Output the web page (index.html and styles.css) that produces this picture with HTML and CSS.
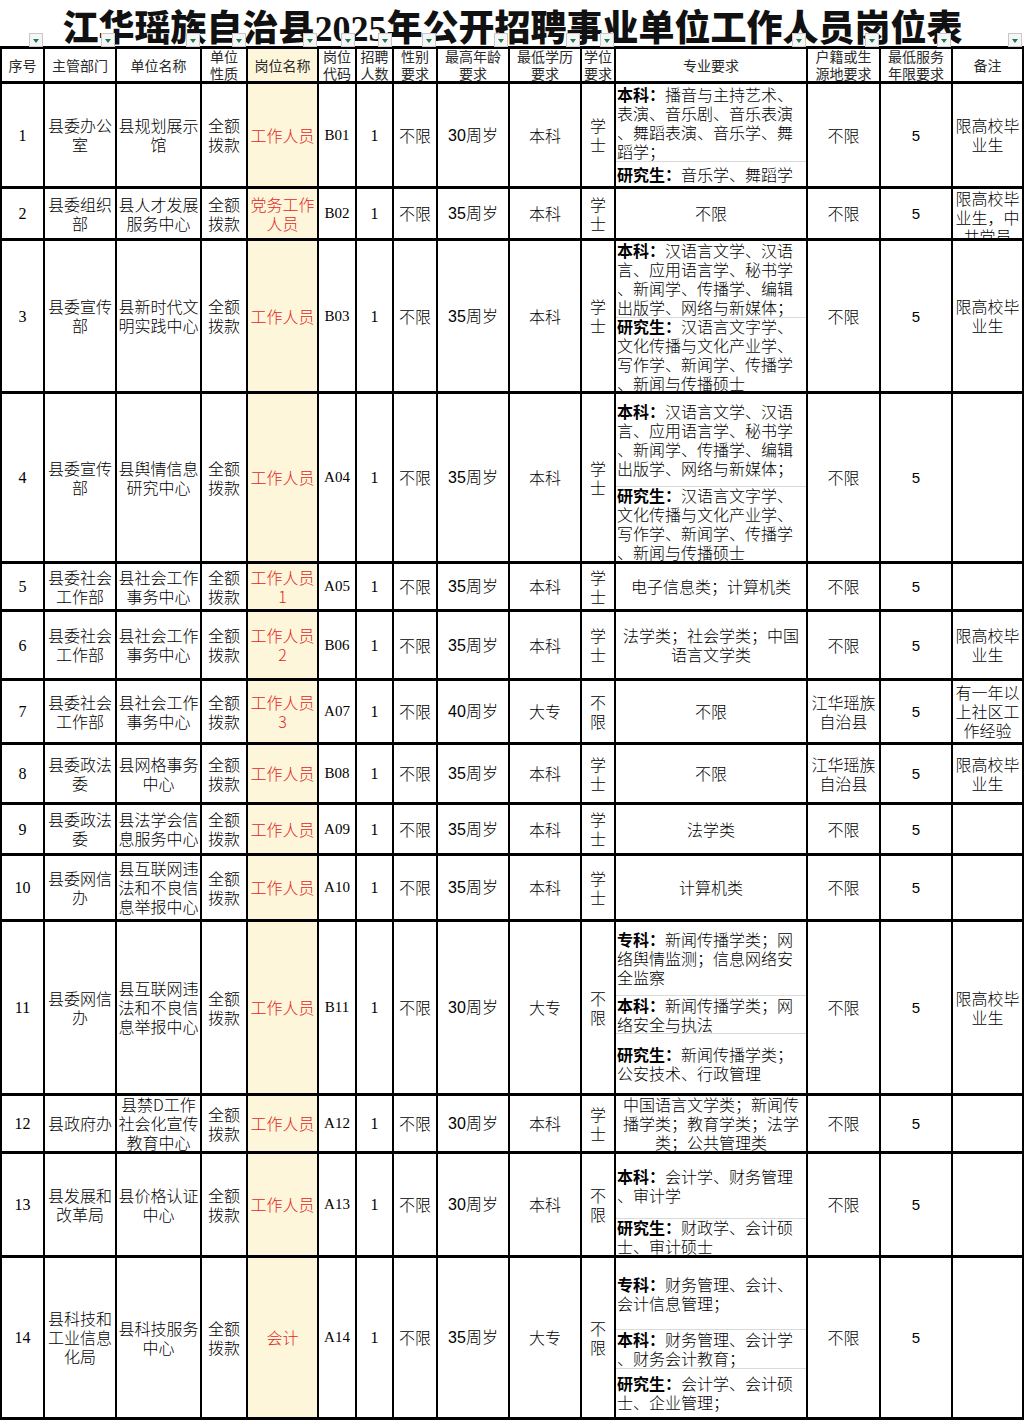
FILE: index.html
```html
<!DOCTYPE html>
<html lang="zh-CN">
<head>
<meta charset="utf-8">
<title>江华瑶族自治县2025年公开招聘事业单位工作人员岗位表</title>
<link rel="stylesheet" href="styles.css">
</head>
<body>
<h1 class="title">江华瑶族自治县<span class="num">2025</span>年公开招聘事业单位工作人员岗位表</h1>
<div class="sheet">
  <div class="row head">
    <div class="c">序号<i class="flt"></i></div>
    <div class="c">主管部门<i class="flt"></i></div>
    <div class="c">单位名称<i class="flt"></i></div>
    <div class="c">单位<br>性质<i class="flt"></i></div>
    <div class="c pos">岗位名称<i class="flt"></i></div>
    <div class="c">岗位<br>代码<i class="flt"></i></div>
    <div class="c">招聘<br>人数<i class="flt"></i></div>
    <div class="c">性别<br>要求<i class="flt"></i></div>
    <div class="c">最高年龄<br>要求<i class="flt"></i></div>
    <div class="c">最低学历<br>要求<i class="flt"></i></div>
    <div class="c">学位<br>要求<i class="flt"></i></div>
    <div class="c">专业要求<i class="flt"></i></div>
    <div class="c">户籍或生<br>源地要求<i class="flt"></i></div>
    <div class="c">最低服务<br>年限要求<i class="flt"></i></div>
    <div class="c">备注<i class="flt"></i></div>
  </div>

  <div class="row">
    <div class="c seq">1</div>
    <div class="c">县委办公<br>室</div>
    <div class="c">县规划展示<br>馆</div>
    <div class="c">全额<br>拨款</div>
    <div class="c pos">工作人员</div>
    <div class="c code">B01</div>
    <div class="c seq">1</div>
    <div class="c">不限</div>
    <div class="c age">30周岁</div>
    <div class="c">本科</div>
    <div class="c">学<br>士</div>
    <div class="c spec s1">
      <div class="blk"><div><b>本科：</b>播音与主持艺术、<br>表演、音乐剧、音乐表演<br>、舞蹈表演、音乐学、舞<br>蹈学；</div></div>
      <div class="blk"><div><b>研究生：</b>音乐学、舞蹈学</div></div>
    </div>
    <div class="c">不限</div>
    <div class="c yrs">5</div>
    <div class="c">限高校毕<br>业生</div>
  </div>

  <div class="row">
    <div class="c seq">2</div>
    <div class="c">县委组织<br>部</div>
    <div class="c">县人才发展<br>服务中心</div>
    <div class="c">全额<br>拨款</div>
    <div class="c pos">党务工作<br>人员</div>
    <div class="c code">B02</div>
    <div class="c seq">1</div>
    <div class="c">不限</div>
    <div class="c age">35周岁</div>
    <div class="c">本科</div>
    <div class="c">学<br>士</div>
    <div class="c">不限</div>
    <div class="c">不限</div>
    <div class="c yrs">5</div>
    <div class="c top">限高校毕<br>业生，中<br>共党员</div>
  </div>

  <div class="row">
    <div class="c seq">3</div>
    <div class="c">县委宣传<br>部</div>
    <div class="c">县新时代文<br>明实践中心</div>
    <div class="c">全额<br>拨款</div>
    <div class="c pos">工作人员</div>
    <div class="c code">B03</div>
    <div class="c seq">1</div>
    <div class="c">不限</div>
    <div class="c age">35周岁</div>
    <div class="c">本科</div>
    <div class="c">学<br>士</div>
    <div class="c spec s3">
      <div class="blk"><div><b>本科：</b>汉语言文学、汉语<br>言、应用语言学、秘书学<br>、新闻学、传播学、编辑<br>出版学、网络与新媒体；</div></div>
      <div class="blk"><div><b>研究生：</b>汉语言文字学、<br>文化传播与文化产业学、<br>写作学、新闻学、传播学<br>、新闻与传播硕士</div></div>
    </div>
    <div class="c">不限</div>
    <div class="c yrs">5</div>
    <div class="c">限高校毕<br>业生</div>
  </div>

  <div class="row">
    <div class="c seq">4</div>
    <div class="c">县委宣传<br>部</div>
    <div class="c">县舆情信息<br>研究中心</div>
    <div class="c">全额<br>拨款</div>
    <div class="c pos">工作人员</div>
    <div class="c code">A04</div>
    <div class="c seq">1</div>
    <div class="c">不限</div>
    <div class="c age">35周岁</div>
    <div class="c">本科</div>
    <div class="c">学<br>士</div>
    <div class="c spec s4">
      <div class="blk"><div><b>本科：</b>汉语言文学、汉语<br>言、应用语言学、秘书学<br>、新闻学、传播学、编辑<br>出版学、网络与新媒体；</div></div>
      <div class="blk"><div><b>研究生：</b>汉语言文字学、<br>文化传播与文化产业学、<br>写作学、新闻学、传播学<br>、新闻与传播硕士</div></div>
    </div>
    <div class="c">不限</div>
    <div class="c yrs">5</div>
    <div class="c"></div>
  </div>

  <div class="row">
    <div class="c seq">5</div>
    <div class="c">县委社会<br>工作部</div>
    <div class="c">县社会工作<br>事务中心</div>
    <div class="c">全额<br>拨款</div>
    <div class="c pos">工作人员<br>1</div>
    <div class="c code">A05</div>
    <div class="c seq">1</div>
    <div class="c">不限</div>
    <div class="c age">35周岁</div>
    <div class="c">本科</div>
    <div class="c">学<br>士</div>
    <div class="c">电子信息类；计算机类</div>
    <div class="c">不限</div>
    <div class="c yrs">5</div>
    <div class="c"></div>
  </div>

  <div class="row">
    <div class="c seq">6</div>
    <div class="c">县委社会<br>工作部</div>
    <div class="c">县社会工作<br>事务中心</div>
    <div class="c">全额<br>拨款</div>
    <div class="c pos">工作人员<br>2</div>
    <div class="c code">B06</div>
    <div class="c seq">1</div>
    <div class="c">不限</div>
    <div class="c age">35周岁</div>
    <div class="c">本科</div>
    <div class="c">学<br>士</div>
    <div class="c">法学类；社会学类；中国<br>语言文学类</div>
    <div class="c">不限</div>
    <div class="c yrs">5</div>
    <div class="c">限高校毕<br>业生</div>
  </div>

  <div class="row">
    <div class="c seq">7</div>
    <div class="c">县委社会<br>工作部</div>
    <div class="c">县社会工作<br>事务中心</div>
    <div class="c">全额<br>拨款</div>
    <div class="c pos">工作人员<br>3</div>
    <div class="c code">A07</div>
    <div class="c seq">1</div>
    <div class="c">不限</div>
    <div class="c age">40周岁</div>
    <div class="c">大专</div>
    <div class="c">不<br>限</div>
    <div class="c">不限</div>
    <div class="c">江华瑶族<br>自治县</div>
    <div class="c yrs">5</div>
    <div class="c">有一年以<br>上社区工<br>作经验</div>
  </div>

  <div class="row">
    <div class="c seq">8</div>
    <div class="c">县委政法<br>委</div>
    <div class="c">县网格事务<br>中心</div>
    <div class="c">全额<br>拨款</div>
    <div class="c pos">工作人员</div>
    <div class="c code">B08</div>
    <div class="c seq">1</div>
    <div class="c">不限</div>
    <div class="c age">35周岁</div>
    <div class="c">本科</div>
    <div class="c">学<br>士</div>
    <div class="c">不限</div>
    <div class="c">江华瑶族<br>自治县</div>
    <div class="c yrs">5</div>
    <div class="c">限高校毕<br>业生</div>
  </div>

  <div class="row">
    <div class="c seq">9</div>
    <div class="c">县委政法<br>委</div>
    <div class="c">县法学会信<br>息服务中心</div>
    <div class="c">全额<br>拨款</div>
    <div class="c pos">工作人员</div>
    <div class="c code">A09</div>
    <div class="c seq">1</div>
    <div class="c">不限</div>
    <div class="c age">35周岁</div>
    <div class="c">本科</div>
    <div class="c">学<br>士</div>
    <div class="c">法学类</div>
    <div class="c">不限</div>
    <div class="c yrs">5</div>
    <div class="c"></div>
  </div>

  <div class="row">
    <div class="c seq">10</div>
    <div class="c">县委网信<br>办</div>
    <div class="c">县互联网违<br>法和不良信<br>息举报中心</div>
    <div class="c">全额<br>拨款</div>
    <div class="c pos">工作人员</div>
    <div class="c code">A10</div>
    <div class="c seq">1</div>
    <div class="c">不限</div>
    <div class="c age">35周岁</div>
    <div class="c">本科</div>
    <div class="c">学<br>士</div>
    <div class="c">计算机类</div>
    <div class="c">不限</div>
    <div class="c yrs">5</div>
    <div class="c"></div>
  </div>

  <div class="row">
    <div class="c seq">11</div>
    <div class="c">县委网信<br>办</div>
    <div class="c">县互联网违<br>法和不良信<br>息举报中心</div>
    <div class="c">全额<br>拨款</div>
    <div class="c pos">工作人员</div>
    <div class="c code">B11</div>
    <div class="c seq">1</div>
    <div class="c">不限</div>
    <div class="c age">30周岁</div>
    <div class="c">大专</div>
    <div class="c">不<br>限</div>
    <div class="c spec s11">
      <div class="blk"><div><b>专科：</b>新闻传播学类；网<br>络舆情监测；信息网络安<br>全监察</div></div>
      <div class="blk"><div><b>本科：</b>新闻传播学类；网<br>络安全与执法</div></div>
      <div class="blk"><div><b>研究生：</b>新闻传播学类；<br>公安技术、行政管理</div></div>
    </div>
    <div class="c">不限</div>
    <div class="c yrs">5</div>
    <div class="c">限高校毕<br>业生</div>
  </div>

  <div class="row">
    <div class="c seq">12</div>
    <div class="c">县政府办</div>
    <div class="c">县禁D工作<br>社会化宣传<br>教育中心</div>
    <div class="c">全额<br>拨款</div>
    <div class="c pos">工作人员</div>
    <div class="c code">A12</div>
    <div class="c seq">1</div>
    <div class="c">不限</div>
    <div class="c age">30周岁</div>
    <div class="c">本科</div>
    <div class="c">学<br>士</div>
    <div class="c">中国语言文学类；新闻传<br>播学类；教育学类；法学<br>类；公共管理类</div>
    <div class="c">不限</div>
    <div class="c yrs">5</div>
    <div class="c"></div>
  </div>

  <div class="row">
    <div class="c seq">13</div>
    <div class="c">县发展和<br>改革局</div>
    <div class="c">县价格认证<br>中心</div>
    <div class="c">全额<br>拨款</div>
    <div class="c pos">工作人员</div>
    <div class="c code">A13</div>
    <div class="c seq">1</div>
    <div class="c">不限</div>
    <div class="c age">30周岁</div>
    <div class="c">本科</div>
    <div class="c">不<br>限</div>
    <div class="c spec s13">
      <div class="blk"><div><b>本科：</b>会计学、财务管理<br>、审计学</div></div>
      <div class="blk"><div><b>研究生：</b>财政学、会计硕<br>士、审计硕士</div></div>
    </div>
    <div class="c">不限</div>
    <div class="c yrs">5</div>
    <div class="c"></div>
  </div>

  <div class="row">
    <div class="c seq">14</div>
    <div class="c">县科技和<br>工业信息<br>化局</div>
    <div class="c">县科技服务<br>中心</div>
    <div class="c">全额<br>拨款</div>
    <div class="c pos">会计</div>
    <div class="c code">A14</div>
    <div class="c seq">1</div>
    <div class="c">不限</div>
    <div class="c age">35周岁</div>
    <div class="c">大专</div>
    <div class="c">不<br>限</div>
    <div class="c spec s14">
      <div class="blk"><div><b>专科：</b>财务管理、会计、<br>会计信息管理；</div></div>
      <div class="blk"><div><b>本科：</b>财务管理、会计学<br>、财务会计教育；</div></div>
      <div class="blk"><div><b>研究生：</b>会计学、会计硕<br>士、企业管理；</div></div>
    </div>
    <div class="c">不限</div>
    <div class="c yrs">5</div>
    <div class="c"></div>
  </div>
</div>
</body>
</html>
```

FILE: styles.css
```css
* { box-sizing: border-box; }

html, body {
  margin: 0;
  padding: 0;
  background: #fff;
}

body {
  width: 1025px;
  font-family: "Noto Sans CJK SC", "Noto Sans", sans-serif;
  color: #000;
}

.title {
  margin: 0;
  height: 46px;
  line-height: 50px;
  text-align: center;
  font-size: 36px;
  font-weight: 900;
  color: #111;
  white-space: nowrap;
}

.title .num {
  font-family: "Liberation Serif", "Noto Sans CJK SC", serif;
  font-weight: 700;
}

.sheet {
  display: grid;
  width: 1024px;
  grid-template-columns: 41px 70px 83px 44px 69px 36px 35px 42px 70px 70px 32px 190px 71px 70px 69px;
  grid-template-rows: 32px 102px 49px 150px 167px 45px 66px 61px 57px 48px 63px 171px 55px 101px 159px;
  column-gap: 2px;
  row-gap: 3px;
  padding: 3px 2px;
  background: #000;
}

.row { display: contents; }

.c {
  background: #fff;
  display: flex;
  align-items: center;
  justify-content: center;
  text-align: center;
  overflow: hidden;
  font-size: 16px;
  line-height: 19px;
  font-weight: 300;
  white-space: nowrap;
}

.c b { font-weight: 700; }

.top { align-items: flex-start; }

.pos {
  background: #fef6da;
  color: #e2261d;
}

.seq {
  font-family: "Liberation Serif", serif;
  font-size: 16px;
  font-weight: 400;
}

.code {
  font-family: "Liberation Serif", serif;
  font-size: 15px;
  font-weight: 400;
}

.age {
  font-family: "Liberation Sans", "Noto Sans CJK SC", sans-serif;
}

.yrs {
  font-family: "Liberation Sans", sans-serif;
  font-size: 15px;
  font-weight: 400;
}

/* header */
.head .c {
  position: relative;
  overflow: visible;
  font-size: 14px;
  line-height: 17px;
  font-weight: 400;
  color: #2a2a2a;
}

.flt {
  position: absolute;
  right: 0;
  top: -16px;
  width: 14px;
  height: 14px;
  background: #f6f6f6;
  border: 1px solid #c8c8c8;
}

.flt::after {
  content: "";
  position: absolute;
  left: 2.5px;
  top: 4.5px;
  border-left: 3.5px solid transparent;
  border-right: 3.5px solid transparent;
  border-top: 4px solid #1d7a4c;
}

/* major requirement sub-blocks */
.spec {
  display: grid;
  justify-content: stretch;
  align-content: stretch;
  align-items: stretch;
  text-align: left;
}

.spec .blk {
  display: flex;
  align-items: center;
  padding-left: 1px;
  overflow: hidden;
}

.spec .blk + .blk { border-top: 1px solid #dadada; }

.s1 { grid-template-rows: 77px 1fr; }
.s3 { grid-template-rows: 76px 1fr; }
.s4 { grid-template-rows: 92px 1fr; }
.s11 { grid-template-rows: 73px 38px 1fr; }
.s13 { grid-template-rows: 64px 1fr; }
.s14 { grid-template-rows: 71px 39px 1fr; }
```
